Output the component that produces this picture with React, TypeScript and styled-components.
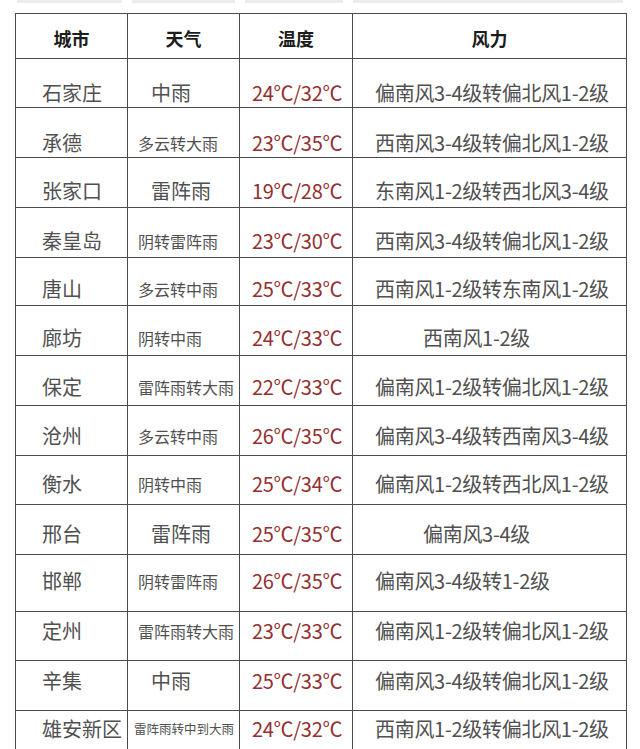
import styled, { createGlobalStyle } from "styled-components";

const GlobalStyle = createGlobalStyle`
  html, body {
    margin: 0;
    padding: 0;
    background: #ffffff;
  }
  body {
    font-family: "Noto Sans CJK SC", "Noto Sans", sans-serif;
    overflow: hidden;
  }
`;

const Page = styled.div`
  width: 640px;
  height: 749px;
  overflow: hidden;
  background: #ffffff;
`;

const TopStrip = styled.div`
  display: flex;
  height: 3px;
  padding-left: 17px;
  gap: 10px;
`;

const Segment = styled.div<{ $w: number }>`
  width: ${(p) => p.$w}px;
  height: 3px;
  background: #ececec;
`;

const Table = styled.div`
  margin: 10px 0 0 15px;
  width: 612px;
  border-right: 1.5px solid #4a4a4a;
  box-sizing: border-box;
`;

const Row = styled.div<{ $h: number }>`
  display: grid;
  grid-template-columns: 112px 112px 113px 1fr;
  height: ${(p) => p.$h}px;
  border-top: 1.5px solid #4a4a4a;
  box-sizing: border-box;
`;

const Cell = styled.div<{ $mid: number; $pad?: number }>`
  border-left: 1.5px solid #4a4a4a;
  box-sizing: border-box;
  padding-top: ${(p) => p.$mid - 12}px;
  padding-left: ${(p) => p.$pad ?? 0}px;
  line-height: 24px;
  white-space: nowrap;
`;

const HeadCell = styled(Cell)`
  text-align: center;
  font-size: 18px;
  font-weight: 700;
  color: #1c1c1c;
`;

const City = styled(Cell)`
  font-size: 20px;
  color: #505050;
`;

const Weather = styled(Cell)<{ $size: number }>`
  font-size: ${(p) => p.$size}px;
  color: #505050;
`;

const Temp = styled(Cell)`
  font-size: 20px;
  color: #943030;
  letter-spacing: -0.3px;
`;

const Wind = styled(Cell)`
  font-size: 20px;
  color: #505050;
  letter-spacing: -0.3px;
`;

type Item = {
  city: string;
  weather: string;
  temp: string;
  wind: string;
  h: number;
  mid: number;
};

const rows: Item[] = [
  { city: "石家庄", weather: "中雨", temp: "24℃/32℃", wind: "偏南风3-4级转偏北风1-2级", h: 49, mid: 34 },
  { city: "承德", weather: "多云转大雨", temp: "23℃/35℃", wind: "西南风3-4级转偏北风1-2级", h: 50, mid: 35 },
  { city: "张家口", weather: "雷阵雨", temp: "19℃/28℃", wind: "东南风1-2级转西北风3-4级", h: 50, mid: 33 },
  { city: "秦皇岛", weather: "阴转雷阵雨", temp: "23℃/30℃", wind: "西南风3-4级转偏北风1-2级", h: 50, mid: 33 },
  { city: "唐山", weather: "多云转中雨", temp: "25℃/33℃", wind: "西南风1-2级转东南风1-2级", h: 48, mid: 31 },
  { city: "廊坊", weather: "阴转中雨", temp: "24℃/33℃", wind: "西南风1-2级", h: 50, mid: 32 },
  { city: "保定", weather: "雷阵雨转大雨", temp: "22℃/33℃", wind: "偏南风1-2级转偏北风1-2级", h: 50, mid: 31 },
  { city: "沧州", weather: "多云转中雨", temp: "26℃/35℃", wind: "偏南风3-4级转西南风3-4级", h: 50, mid: 30 },
  { city: "衡水", weather: "阴转中雨", temp: "25℃/34℃", wind: "偏南风1-2级转西北风1-2级", h: 49, mid: 28 },
  { city: "邢台", weather: "雷阵雨", temp: "25℃/35℃", wind: "偏南风3-4级", h: 50, mid: 29 },
  { city: "邯郸", weather: "阴转雷阵雨", temp: "26℃/35℃", wind: "偏南风3-4级转1-2级", h: 57, mid: 26 },
  { city: "定州", weather: "雷阵雨转大雨", temp: "23℃/33℃", wind: "偏南风1-2级转偏北风1-2级", h: 49, mid: 19 },
  { city: "辛集", weather: "中雨", temp: "25℃/33℃", wind: "偏南风3-4级转偏北风1-2级", h: 50, mid: 20 },
  { city: "雄安新区", weather: "雷阵雨转中到大雨", temp: "24℃/32℃", wind: "西南风1-2级转偏北风1-2级", h: 60, mid: 18 },
];

const headers = ["城市", "天气", "温度", "风力"];

// short weather text sits larger and further in; long text shrinks to fit
const weatherSize = (w: string) => (w.length <= 3 ? 20 : w.length <= 6 ? 16 : 12.5);
const weatherPad = (w: string) => (w.length <= 3 ? 23 : w.length <= 6 ? 10 : 6);

export default function App() {
  return (
    <Page>
      <GlobalStyle />
      <TopStrip>
        <Segment $w={105} />
        <Segment $w={103} />
        <Segment $w={98} />
        <Segment $w={270} />
      </TopStrip>
      <Table>
        <Row $h={45}>
          {headers.map((h) => (
            <HeadCell key={h} $mid={24}>
              {h}
            </HeadCell>
          ))}
        </Row>
        {rows.map((r) => {
          const shortWind = r.wind.length < 10;
          return (
            <Row key={r.city} $h={r.h}>
              <City $mid={r.mid} $pad={26}>
                {r.city}
              </City>
              <Weather
                $mid={r.mid}
                $pad={weatherPad(r.weather)}
                $size={weatherSize(r.weather)}
              >
                {r.weather}
              </Weather>
              <Temp $mid={r.mid} $pad={12}>
                {r.temp}
              </Temp>
              <Wind $mid={r.mid} $pad={shortWind ? 70 : 22}>
                {r.wind}
              </Wind>
            </Row>
          );
        })}
      </Table>
    </Page>
  );
}
